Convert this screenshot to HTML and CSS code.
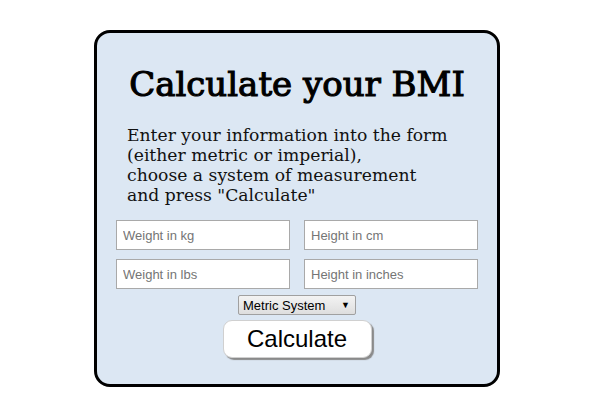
FILE: index.html
```html
<!DOCTYPE html>
<html>
<head>
<meta charset="utf-8">
<link rel="stylesheet" href="styles.css">
</head>
<body>
<div class="card">
  <h1 class="title">Calculate your BMI</h1>
  <p class="intro">Enter your information into the form<br>(either metric or imperial),<br>choose a system of measurement<br>and press "Calculate"</p>
  <div class="fields">
    <input class="field" type="text" placeholder="Weight in kg">
    <input class="field" type="text" placeholder="Height in cm">
    <input class="field" type="text" placeholder="Weight in lbs">
    <input class="field" type="text" placeholder="Height in inches">
  </div>
  <div class="controls">
    <div class="select">Metric System<span class="arrow">▼</span></div>
    <button class="calc" type="button">Calculate</button>
  </div>
</div>
</body>
</html>
```
FILE: styles.css
```css
html, body {
  margin: 0;
  padding: 0;
  background: #ffffff;
}
body {
  padding-top: 30px;
}
.card {
  box-sizing: border-box;
  width: 406px;
  height: 357px;
  margin-left: 94px;
  border: 3px solid #000;
  border-radius: 16px;
  background: #dce7f3;
  padding: 0 19px;
}
.title {
  margin: 31px 0 0;
  text-align: center;
  font-family: "DejaVu Serif", serif;
  font-weight: normal;
  font-size: 34px;
  line-height: 40px;
  color: #000;
  -webkit-text-stroke: 1.1px #000;
}
.intro {
  margin: 21px 0 0 11px;
  font-family: "DejaVu Serif", serif;
  font-size: 17.2px;
  line-height: 20px;
  color: #111;
  white-space: nowrap;
}
.fields {
  margin-top: 15px;
  display: grid;
  grid-template-columns: 174px 174px;
  column-gap: 14px;
  row-gap: 9px;
}
.field {
  box-sizing: border-box;
  width: 174px;
  height: 30px;
  margin: 0;
  padding: 0 6px;
  border: 1px solid #a9a9a9;
  background: #fff;
  font-family: "Liberation Sans", Arial, sans-serif;
  font-size: 13px;
  color: #333;
  outline: none;
}
.field::placeholder {
  color: #757575;
}
.controls {
  display: flex;
  flex-direction: column;
  align-items: center;
  margin-top: 6px;
}
.select {
  box-sizing: border-box;
  width: 118px;
  height: 20px;
  display: flex;
  align-items: center;
  justify-content: space-between;
  padding: 0 5px 0 4px;
  border: 1px solid #a0a0a0;
  border-radius: 2px;
  background: linear-gradient(#f3f3f3, #dedede);
  font-family: "Liberation Sans", Arial, sans-serif;
  font-size: 13px;
  color: #000;
}
.arrow {
  font-size: 9px;
}
.calc {
  margin-top: 5px;
  box-sizing: border-box;
  width: 149px;
  height: 38px;
  border: 1px solid #d0d0d0;
  border-radius: 9px;
  background: #fff;
  box-shadow: 2px 2px 1px #8a8a8a;
  font-family: "Liberation Sans", Arial, sans-serif;
  font-size: 24px;
  color: #000;
  padding: 0;
}
```
